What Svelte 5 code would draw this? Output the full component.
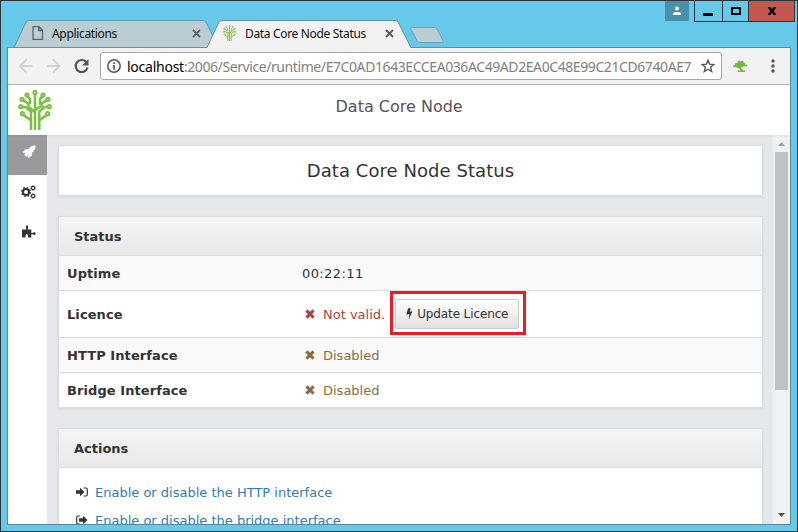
<script>
  const rows = [
    { label: 'Uptime', value: '00:22:11', kind: 'plain' },
    { label: 'Licence', value: 'Not valid.', kind: 'bad', button: true },
    { label: 'HTTP Interface', value: 'Disabled', kind: 'warn' },
    { label: 'Bridge Interface', value: 'Disabled', kind: 'warn' }
  ];
</script>

{#snippet tree(size, h)}
  <svg width={size} height={h} viewBox="0 0 34 40" fill="none" stroke="#7ac143" stroke-width="2.500">
    <path d="M13 40V30.500L5 24.500M21.300 40V30.500L29.500 24.500M17 40V3M3 17H7.500L13 21.500V31M31 17H26.500L21.300 21.500V31M5 10L10.500 14V17L17 22M9 6L12 9V14M29 10L23.500 13.500V16L17 20M25 6L22 9V15" />
    <g fill="#e4f3d8" stroke-width="2"><circle cx="17" cy="2.500" r="1.600"/><circle cx="9" cy="5" r="1.600"/><circle cx="25" cy="5" r="1.600"/><circle cx="4" cy="9.300" r="1.600"/><circle cx="30" cy="9.300" r="1.600"/><circle cx="2.800" cy="16.700" r="1.600"/><circle cx="31.200" cy="16.700" r="1.600"/><circle cx="4.400" cy="23.700" r="1.600"/><circle cx="29.700" cy="23.700" r="1.600"/></g>
  </svg>
{/snippet}

{#snippet cross()}
  <svg class="cross" width="10" height="10" viewBox="0 0 10 10"><path d="M1.400 1.400L8.600 8.600M8.600 1.400L1.400 8.600" stroke="currentColor" stroke-width="2.900"/></svg>
{/snippet}

<div class="window">
  <div class="titlebar">
    <svg class="tabshapes" width="450" height="29" viewBox="0 0 450 29">
      <path d="M7.500 28.500L20 2Q21 1.500 22 1.500H196Q198 1.500 199 3L211 28.500Z" fill="#b9cdd3"/>
      <path d="M7 28.500L19.500 2Q20.500 1.500 22 1.500H196Q198 1.500 199 3L206 17" fill="none" stroke="#5f9cae"/>
      <path d="M404 8.500H427Q429 8.500 430 10L436 21.500Q437 23.500 435 23.500H413Q411 23.500 410 22L404 10Q403 8.500 404 8.500Z" fill="#b9cdd3" stroke="#6aa3b5"/>
      <path d="M200 29L212 3Q213 1.500 215 1.500H388Q390 1.500 391 3L404 29Z" fill="#f2f2f2"/>
      <path d="M0 28.500H200L212 3Q213 1.500 215 1.500H388Q390 1.500 391 3L404 28.500H450" fill="none" stroke="#66909c"/>
    </svg>
    <div class="tab first">
      <svg width="12" height="14" viewBox="0 0 12 14" fill="none" stroke="#5c666b" stroke-width="1.300"><path d="M1 .7H7L10.500 4.200V13.300H1ZM6.700 .7V4.500H10.500"/></svg>
      <span class="t1">Applications</span>
      <svg class="x" width="9" height="9" viewBox="0 0 9 9"><path d="M1 1L8 8M8 1L1 8" stroke="#5a666b" stroke-width="1.900"/></svg>
    </div>
    <div class="tab second">
      {@render tree(15, 16)}
      <span class="t2">Data Core Node Status</span>
      <svg class="x" width="9" height="9" viewBox="0 0 9 9"><path d="M1 1L8 8M8 1L1 8" stroke="#5a5a5a" stroke-width="1.900"/></svg>
    </div>
    <div class="person"><svg width="10" height="10" viewBox="0 0 10 10" fill="#fff"><circle cx="5" cy="2.500" r="2"/><path d="M1 9V7.500Q1 6 5 6T9 7.500V9Z"/></svg></div>
    <div class="controls">
      <div class="min"><i></i></div>
      <div class="max"><i></i></div>
      <div class="close"><svg width="10" height="8" viewBox="0 0 10 8"><path d="M1.800 0L8.200 8M8.200 0L1.800 8" stroke="#000" stroke-width="2.400"/></svg></div>
    </div>
  </div>

  <div class="browser">
    <div class="toolbar">
      <svg class="nav" width="78" height="18" viewBox="0 0 78 18" fill="none" stroke-width="2">
        <path d="M13.500 9H1.500M7.500 2.500L1 9L7.500 15.500M28 9H40M34 2.500L40.500 9L34 15.500" stroke="#d2d2d2"/>
        <path d="M67 4.800A6 6 0 1 0 68.500 10.500" stroke="#555" stroke-width="2.200"/><path d="M69.500 2V8.500H63Z" fill="#555"/>
      </svg>
      <div class="address">
        <svg width="14" height="14" viewBox="0 0 14 14"><circle cx="7" cy="7" r="6.200" fill="none" stroke="#555" stroke-width="1.500"/><path d="M6.200 3.200h1.700v1.700H6.200zM6.200 6h1.700v4.800H6.200z" fill="#555"/></svg>
        <span class="url"><b>localhost</b>:2006/Service/runtime/E7C0AD1643ECCEA036AC49AD2EA0C48E99C21CD6740AE7</span>
        <svg class="star" width="14" height="14" viewBox="0 0 14 14"><path d="M7 1.300L8.600 5.200L12.900 5.500L9.600 8.200L10.700 12.500L7 10.200L3.300 12.500L4.400 8.200L1.100 5.500L5.400 5.200Z" fill="none" stroke="#555" stroke-width="1.400"/></svg>
      </div>
      <svg class="bonsai" width="15" height="13" viewBox="0 0 15 13" fill="#72b844"><path d="M2 3.500L4.500 2.500L6 .5L8 1.200L10 .8L10.500 2.500L12.500 3L12 4.500L14.500 5L13.500 6.500L10.500 6.200L9.500 7.500L8 7.200L8.500 9L10.500 10V10.500H12V12H5V10.500H7.500L6 8L4 8.300L3.500 7L.5 7.200L0 5.500L2 5Z"/></svg>
      <svg class="dots" width="4" height="14" viewBox="0 0 4 14" fill="#555"><circle cx="2" cy="2" r="1.700"/><circle cx="2" cy="7" r="1.700"/><circle cx="2" cy="12" r="1.700"/></svg>
    </div>

    <div class="page">
      <header>
        <div class="logo">{@render tree(34, 40)}</div>
        <span class="brand">Data Core Node</span>
      </header>
      <div class="body">
        <nav>
          <div class="item active"><svg width="14" height="14" viewBox="0 0 14 14" fill="#fff"><path d="M13.500 .5Q9 .3 6.500 4L3.500 4.300L.5 7.500L3.500 7.800L2.200 9.800L4.200 11.800L6.200 10.500L6.500 13.500L9.700 10.500L10 7.500Q13.700 5 13.500 .5Z"/></svg></div>
          <div class="item"><svg width="15" height="14" viewBox="0 0 15 14" fill="none" stroke="#333"><circle cx="5" cy="7" r="3" stroke-width="2"/><circle cx="5" cy="7" r="4.400" stroke-width="1.300" stroke-dasharray="1.730 1.730"/><circle cx="12" cy="3" r="1.600" stroke-width="1.100"/><circle cx="12" cy="3" r="2.400" stroke-width=".8" stroke-dasharray="1 .88"/><circle cx="12" cy="11" r="1.600" stroke-width="1.100"/><circle cx="12" cy="11" r="2.400" stroke-width=".8" stroke-dasharray="1 .88"/></svg></div>
          <div class="item"><svg width="14" height="14" viewBox="0 0 14 14" fill="#333"><path d="M0 4.500H4.300L3.800 2Q3.700 .3 5 .3T6.200 2L5.700 4.500H9.300V8L11.500 7.800L12.200 7Q13.600 7 13.600 8.600T12.200 10.300L11.500 9.500L9.300 9.300V12.500H6V10.500Q5.800 9 4.800 9T3.500 10.500V12.500H0Z"/></svg></div>
        </nav>
        <main>
          <section class="card title"><span class="h">Data Core Node Status</span></section>
          <section class="card status">
            <h2><span>Status</span></h2>
            {#each rows as r}
              <div class="row" class:tall={r.button}>
                <strong>{r.label}</strong>
                <div class="val {r.kind}">
                  {#if r.kind !== 'plain'}{@render cross()}{/if}
                  <span>{r.value}</span>
                  {#if r.button}
                    <div class="highlight"><button><svg width="7" height="12" viewBox="0 0 7 12"><path d="M2 .3H4.800L3.700 3.800L6.500 3.200L2.700 11.700L3.500 6L.5 6.700Z" fill="#333"/></svg><span>Update Licence</span></button></div>
                  {/if}
                </div>
              </div>
            {/each}
          </section>
          <section class="card actions">
            <h2><span>Actions</span></h2>
            <a href="#http"><svg width="12" height="10" viewBox="0 0 12 10"><path d="M0 3.300H4V.8L8.500 5L4 9.200V6.700H0Z" fill="#333"/><path d="M7.500 1H10Q11.300 1 11.300 2.500V7.500Q11.300 9 10 9H7.500" fill="none" stroke="#333" stroke-width="1.200"/></svg><span>Enable or disable the HTTP interface</span></a>
            <a href="#bridge"><svg width="12" height="10" viewBox="0 0 12 10"><path d="M3 3.300H7V.8L11.500 5L7 9.200V6.700H3Z" fill="#333"/><path d="M4 1H2Q.7 1 .7 2.500V7.500Q.7 9 2 9H4" fill="none" stroke="#333" stroke-width="1.200"/></svg><span>Enable or disable the bridge interface</span></a>
          </section>
        </main>
        <div class="scroll"><svg width="7" height="4" viewBox="0 0 7 4"><path d="M3.500 0L7 4H0Z" fill="#a0a0a0"/></svg><div class="thumb"></div><svg class="down" width="7" height="4" viewBox="0 0 7 4"><path d="M0 0H7L3.500 4Z" fill="#505050"/></svg></div>
      </div>
    </div>
  </div>
</div>

<style>
  :global(body) { margin: 0; overflow: hidden; }
  .window, .window * { box-sizing: border-box; }
  .window { width: 798px; height: 532px; border: 1px solid #2b3438; background: #66c9ea; display: flex; flex-direction: column; font-family: "DejaVu Sans", Verdana, sans-serif; color: #333; font-size: 13px; overflow: hidden; }
  svg { display: block; flex: none; }
  span, strong { white-space: nowrap; }
  .titlebar { height: 46px; flex: none; display: flex; position: relative; font: 12px "Noto Sans", "Open Sans", sans-serif; }
  .tabshapes { position: absolute; left: 6px; top: 18px; }
  .tab { display: flex; align-items: center; height: 28px; margin-top: 18px; position: relative; color: #111; letter-spacing: -0.33px; }
  .first { margin-left: 31px; width: 190px; }
  .second { width: 200px; }
  .t1 { margin-left: 8px; }
  .t2 { margin-left: 8px; }
  .first .x { margin-left: auto; margin-right: 21px; }
  .second .x { margin-left: auto; margin-right: 28px; }
  .person { width: 24px; height: 20px; background: #4a90a8; margin-left: 243px; display: flex; justify-content: center; align-items: center; }
  .controls { display: flex; height: 21px; border: 1px solid #2b3438; border-top: 0; margin-left: 5px; }
  .controls > div { display: flex; align-items: center; justify-content: center; border-right: 1px solid #2b3438; }
  .min { width: 28px; }
  .max { width: 26px; }
  .controls > .close { width: 45px; background: #c4574e; border: 0; }
  .min i { width: 10px; height: 3px; background: #000; margin: 6px 1px 0 0; }
  .max i { width: 10px; height: 8px; border: 2px solid #000; }
  .browser { margin: 0 6px 6px; flex: 1; min-height: 0; border: 1px solid #568b9b; display: flex; flex-direction: column; background: #fff; }
  .toolbar { height: 37px; flex: none; background: #f2f2f2; border-bottom: 1px solid #b0b0b0; display: flex; align-items: center; }
  .nav { margin-left: 11px; }
  .address { width: 622px; height: 28px; margin-left: 3px; border: 1px solid #a9a9a9; border-radius: 3px; background: #fff; display: flex; align-items: center; padding: 0 6px; }
  .url { margin-left: 6px; color: #808080; font: 14px "Noto Sans", "Open Sans", sans-serif; letter-spacing: -0.415px; }
  .url b { color: #000; font-weight: 400; letter-spacing: -0.25px; }
  .star { margin-left: auto; }
  .bonsai { margin-left: 11px; }
  .dots { margin-left: 23px; }
  .page { flex: 1; min-height: 0; display: flex; flex-direction: column; }
  header { height: 50px; flex: none; display: flex; background: #fff; position: relative; box-shadow: 0 1px 3px #0001; }
  .logo { padding: 5px 0 0 10px; width: 54px; }
  .brand { font-size: 16px; line-height: 43px; margin-left: 273.5px; color: #555; }
  .body { display: flex; flex: 1; min-height: 0; }
  nav { width: 39px; background: #fff; }
  .item { height: 40px; display: flex; justify-content: center; padding: 10px 0 0 2px; }
  .active { background: #9a9a9c; }
  main { flex: 1; background: #e4e8eb; padding: 10px 10px 0 11px; overflow: hidden; min-width: 0; }
  .card { background: #fff; border: 1px solid #dcdcdc; box-shadow: 0 1px 3px #0001; }
  .title { height: 51px; display: flex; align-items: center; justify-content: center; font-size: 18px; margin-bottom: 20px; letter-spacing: .06px; }
  h2 { margin: 0; height: 38px; font-size: 13px; line-height: 40px; padding-left: 15px; background: linear-gradient(#f5f5f5, #e8e8e8); }
  .status { margin-bottom: 20px; }
  .row { border-top: 1px solid #ddd; height: 35px; display: flex; align-items: center; padding-left: 8px; background: #fff; }
  .row:nth-child(even) { background: #f9f9f9; }
  .tall { height: 47px; }
  .row strong { width: 235px; letter-spacing: .08px; }
  .plain { letter-spacing: .4px; }
  .val { display: flex; align-items: center; }
  .cross { margin: 0 8px 0 3px; }
  .bad { color: #a94442; }
  .warn { color: #8a6d3b; }
  .highlight { width: 136px; height: 44px; border: 3px solid #ed1c24; margin: 0 0 2px 5px; padding: 5px 3px 0 2px; }
  button { width: 124px; height: 30px; border: 1px solid #ccc; border-radius: 2px; background: linear-gradient(#fff, #e0e0e0); display: flex; align-items: center; padding: 0 0 0 10px; gap: 4px; font: 12px "DejaVu Sans", Verdana, sans-serif; color: #333; letter-spacing: -.12px; }
  .actions { height: 180px; }
  .actions h2 { border-bottom: 1px solid #ddd; height: 39px; margin-bottom: 10px; }
  a { display: flex; align-items: center; height: 28px; padding-left: 17px; gap: 7px; color: #337ab7; text-decoration: none; }
  .scroll { width: 17px; background: #f1f1f1; display: flex; flex-direction: column; align-items: center; padding-top: 7px; }
  .thumb { width: 13px; height: 238px; background: #c1c1c1; margin-top: 6px; }
  .down { margin-top: auto; margin-bottom: 7px; }
</style>
